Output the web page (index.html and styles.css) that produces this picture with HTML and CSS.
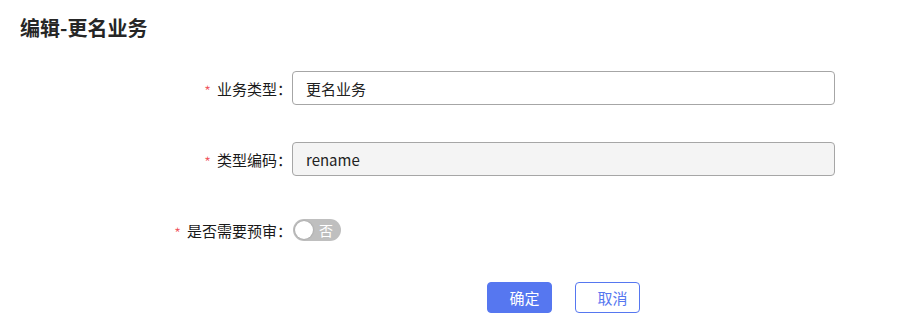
FILE: index.html
```html
<!DOCTYPE html>
<html lang="zh-CN">
  <head>
    <meta charset="UTF-8" />
    <title>编辑-更名业务</title>
    <link rel="stylesheet" href="styles.css">
  </head>
  <body>
    <h1 class="title">编辑-更名业务</h1>
    <form class="form">
      <label class="label"><span class="req">*</span>业务类型：</label>
      <input class="input" type="text" value="更名业务" />

      <label class="label"><span class="req">*</span>类型编码：</label>
      <input class="input disabled" type="text" value="rename" disabled />

      <label class="label"><span class="req">*</span>是否需要预审：</label>
      <div class="field">
        <span class="switch">
          <span class="knob"></span>
          <span class="switch-text">否</span>
        </span>
      </div>

      <div></div>
      <div class="actions">
        <button type="button" class="btn primary">确定</button>
        <button type="button" class="btn ghost">取消</button>
      </div>
    </form>
  </body>
</html>
```

FILE: styles.css
```css
* {
  margin: 0;
  padding: 0;
  box-sizing: border-box;
}
body {
  background: #fff;
  font-family: "Noto Sans CJK SC", "Liberation Sans", sans-serif;
  color: #222;
}
.title {
  font-size: 20px;
  font-weight: bold;
  line-height: 28px;
  padding: 14px 20px 0;
  color: #262626;
}
.form {
  display: grid;
  grid-template-columns: 292px 543px;
  grid-auto-rows: 34px;
  row-gap: 37px;
  margin-top: 29px;
}
.label {
  display: flex;
  align-items: center;
  justify-content: flex-end;
  font-size: 15px;
  color: #1a1a1a;
}
.req {
  color: #f0505a;
  margin-right: 6px;
  font-size: 16px;
  font-weight: 300;
  transform: translateY(3px);
}
.input {
  height: 34px;
  border: 1px solid #a6a6a6;
  border-radius: 4px;
  padding: 0 13px;
  font-family: inherit;
  font-size: 15px;
  color: #222;
  background: #fff;
  outline: none;
}
.input.disabled {
  background: #f4f4f4;
  color: #222;
  -webkit-text-fill-color: #222;
}
.field {
  display: flex;
  align-items: center;
}
.switch {
  position: relative;
  display: flex;
  align-items: center;
  width: 48px;
  height: 22px;
  border-radius: 11px;
  background: #bfbfbf;
  margin-left: 1px;
}
.knob {
  position: absolute;
  left: 2px;
  top: 2px;
  width: 18px;
  height: 18px;
  border-radius: 50%;
  background: #fff;
  box-shadow: 0 0 2px rgba(0, 0, 0, 0.25);
}
.switch-text {
  margin-left: 26px;
  font-size: 14px;
  color: #fff;
  line-height: 22px;
}
.actions {
  display: flex;
  justify-content: center;
  align-items: flex-start;
  gap: 23px;
  margin-top: -2px;
}
.btn {
  width: 65px;
  height: 31px;
  border-radius: 4px;
  padding-left: 10px;
  font-family: inherit;
  font-size: 15px;
  cursor: pointer;
}
.btn.primary {
  background: #5677f0;
  border: 1px solid #5677f0;
  color: #fff;
}
.btn.ghost {
  background: #fff;
  border: 1px solid #5677f0;
  color: #5677f0;
}
```
